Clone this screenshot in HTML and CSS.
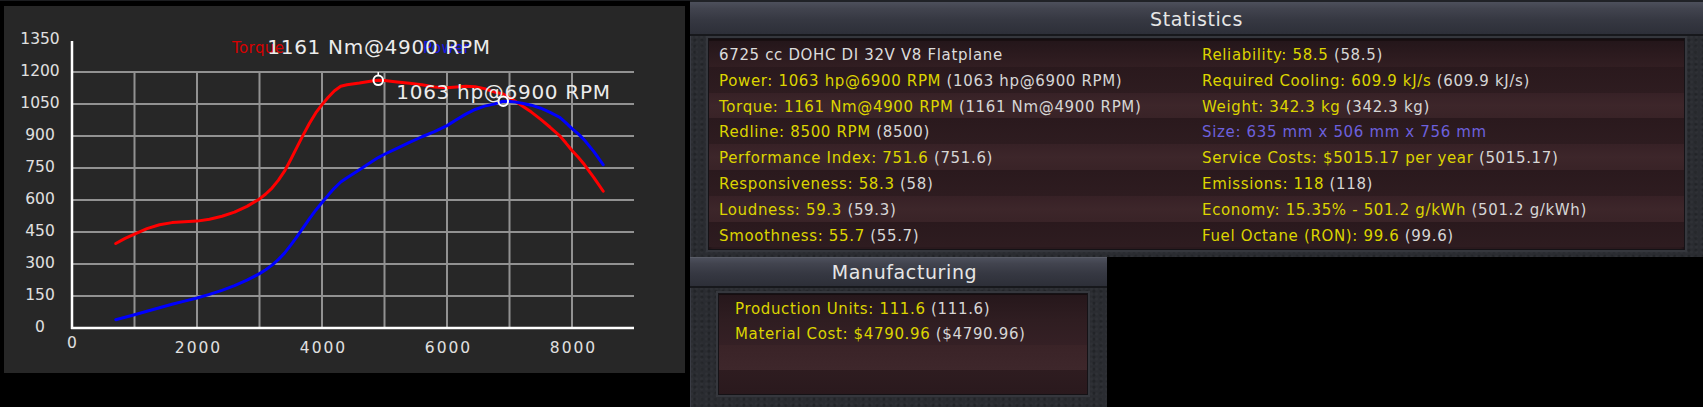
FILE: index.html
```html
<!DOCTYPE html>
<html lang="en">
<head>
<meta charset="utf-8">
<title>Engine Statistics</title>
<link rel="stylesheet" href="styles.css">
</head>
<body>
<div class="app">
  <div class="chart-col">
    <div class="chart-box">
      <svg class="chart" width="681" height="365" viewBox="4 5 681 365" xmlns="http://www.w3.org/2000/svg">
        <g class="grid">
          <line x1="72" y1="295" x2="634" y2="295"/>
          <line x1="72" y1="263" x2="634" y2="263"/>
          <line x1="72" y1="231" x2="634" y2="231"/>
          <line x1="72" y1="199" x2="634" y2="199"/>
          <line x1="72" y1="167" x2="634" y2="167"/>
          <line x1="72" y1="135" x2="634" y2="135"/>
          <line x1="72" y1="103" x2="634" y2="103"/>
          <line x1="72" y1="71" x2="634" y2="71"/>
          <line x1="134.5" y1="71" x2="134.5" y2="327"/>
          <line x1="197" y1="71" x2="197" y2="327"/>
          <line x1="259.5" y1="71" x2="259.5" y2="327"/>
          <line x1="322" y1="71" x2="322" y2="327"/>
          <line x1="384.5" y1="71" x2="384.5" y2="327"/>
          <line x1="447" y1="71" x2="447" y2="327"/>
          <line x1="509.5" y1="71" x2="509.5" y2="327"/>
          <line x1="572" y1="71" x2="572" y2="327"/>
        </g>
        <g class="axes">
          <line x1="72" y1="40" x2="72" y2="328"/>
          <line x1="71" y1="327" x2="634" y2="327"/>
        </g>
        <g class="ylabels">
          <text x="40" y="43">1350</text>
          <text x="40" y="75">1200</text>
          <text x="40" y="107">1050</text>
          <text x="40" y="139">900</text>
          <text x="40" y="171">750</text>
          <text x="40" y="203">600</text>
          <text x="40" y="235">450</text>
          <text x="40" y="267">300</text>
          <text x="40" y="299">150</text>
          <text x="40" y="331">0</text>
        </g>
        <g class="xlabels">
          <text x="73" y="347">0</text>
          <text x="198.5" y="352">2000</text>
          <text x="323.5" y="352">4000</text>
          <text x="448.5" y="352">6000</text>
          <text x="573.5" y="352">8000</text>
        </g>
        <text class="legend legend-torque" x="232" y="52">Torque</text>
        <text class="legend legend-power" x="423" y="52">Power</text>
        <g transform="translate(72 327) scale(0.0625 -0.2133333)">
          <polyline class="curve torque" vector-effect="non-scaling-stroke" points="700,396 850,420 1000,440 1200,466 1400,484 1600,494 1800,498 2000,501 2200,510 2400,524 2600,543 2800,570 3000,605 3100,628 3200,656 3300,692 3400,735 3500,790 3600,848 3700,905 3800,960 3900,1008 4000,1047 4100,1082 4200,1112 4300,1133 4400,1140 4600,1148 4800,1158 4900,1161 5000,1160 5200,1153 5400,1147 5600,1140 5800,1130 6000,1126 6150,1130 6300,1133 6450,1131 6600,1122 6750,1107 6900,1097 7000,1080 7100,1062 7200,1042 7350,1012 7500,978 7650,941 7800,902 7900,868 8000,832 8100,800 8200,765 8350,705 8500,641"/>
          <polyline class="curve power" vector-effect="non-scaling-stroke" points="700,38.9 850,50.1 1000,61.8 1200,78.5 1400,95.2 1600,111 1800,125.9 2000,140.7 2200,157.6 2400,176.6 2600,198.3 2800,224.1 3000,254.9 3100,273.4 3200,294.8 3300,320.7 3400,350.9 3500,388.3 3600,428.7 3700,470.2 3800,512.3 3900,552.1 4000,588.1 4100,623 4200,655.9 4300,684.2 4400,704.4 4600,741.6 4800,780.6 4900,798.9 5000,814.5 5200,842 5400,869.8 5600,896.5 5800,920.4 6000,948.7 6150,975.9 6300,1002.4 6450,1024.4 6600,1039.9 6750,1049.3 6900,1062.9 7000,1061.6 7100,1058.9 7200,1053.6 7350,1044.5 7500,1030.1 7650,1010.9 7800,988 7900,963 8000,934.7 8100,910 8200,880.9 8350,826.7 8500,765.1"/>
        </g>
        <line class="marker-tick" x1="378.25" y1="71" x2="378.25" y2="75"/>
        <circle class="marker" cx="378.25" cy="79.3" r="4.8"/>
        <circle class="marker" cx="503.25" cy="100.2" r="4.8"/>
        <text class="peak" x="379" y="53">1161 Nm@4900 RPM</text>
        <text class="peak" x="503.5" y="98">1063 hp@6900 RPM</text>
      </svg>
    </div>
  </div>

  <div class="right-col">
    <section class="panel stats">
      <header class="panel-head"><h2 class="panel-title">Statistics</h2></header>
      <div class="panel-body">
        <div class="stat-box">
          <div class="row"><span class="cell"><span class="plain">6725 cc DOHC DI 32V V8 Flatplane</span></span><span class="cell"><span class="lbl">Reliability: 58.5</span> <span class="val">(58.5)</span></span></div>
          <div class="row"><span class="cell"><span class="lbl">Power: 1063 hp@6900 RPM</span> <span class="val">(1063 hp@6900 RPM)</span></span><span class="cell"><span class="lbl">Required Cooling: 609.9 kJ/s</span> <span class="val">(609.9 kJ/s)</span></span></div>
          <div class="row"><span class="cell"><span class="lbl">Torque: 1161 Nm@4900 RPM</span> <span class="val">(1161 Nm@4900 RPM)</span></span><span class="cell"><span class="lbl">Weight: 342.3 kg</span> <span class="val">(342.3 kg)</span></span></div>
          <div class="row"><span class="cell"><span class="lbl">Redline: 8500 RPM</span> <span class="val">(8500)</span></span><span class="cell"><span class="size">Size: 635 mm x 506 mm x 756 mm</span></span></div>
          <div class="row"><span class="cell"><span class="lbl">Performance Index: 751.6</span> <span class="val">(751.6)</span></span><span class="cell"><span class="lbl">Service Costs: $5015.17 per year</span> <span class="val">(5015.17)</span></span></div>
          <div class="row"><span class="cell"><span class="lbl">Responsiveness: 58.3</span> <span class="val">(58)</span></span><span class="cell"><span class="lbl">Emissions: 118</span> <span class="val">(118)</span></span></div>
          <div class="row"><span class="cell"><span class="lbl">Loudness: 59.3</span> <span class="val">(59.3)</span></span><span class="cell"><span class="lbl">Economy: 15.35% - 501.2 g/kWh</span> <span class="val">(501.2 g/kWh)</span></span></div>
          <div class="row"><span class="cell"><span class="lbl">Smoothness: 55.7</span> <span class="val">(55.7)</span></span><span class="cell"><span class="lbl">Fuel Octane (RON): 99.6</span> <span class="val">(99.6)</span></span></div>
        </div>
      </div>
    </section>

    <div class="lower">
      <section class="panel manuf">
        <header class="panel-head manuf-head"><h2 class="panel-title">Manufacturing</h2></header>
        <div class="panel-body manuf-body">
          <div class="manuf-box">
            <div class="mrow m1"><span class="lbl">Production Units: 111.6</span> <span class="val">(111.6)</span></div>
            <div class="mrow m2"><span class="lbl">Material Cost: $4790.96</span> <span class="val">($4790.96)</span></div>
            <div class="mrow m3"></div>
            <div class="mrow m4"></div>
          </div>
        </div>
      </section>
      <div class="void"></div>
    </div>
  </div>
</div>
</body>
</html>
```

FILE: styles.css
```css
* { box-sizing: border-box; }

html, body {
  margin: 0;
  padding: 0;
  background: #000;
}

body {
  width: 1703px;
  height: 407px;
  overflow: hidden;
  font-family: "DejaVu Sans", Verdana, sans-serif;
}

.app {
  display: flex;
  height: 407px;
}

/* ---------- chart ---------- */
.chart-col {
  width: 690px;
  flex: 0 0 690px;
  padding: 5px 5px 0 4px;
  background: #000;
  border-top: 1px solid #1c1d20;
}

.chart-box {
  width: 681px;
  height: 367px;
  background: #272727;
}

.chart { display: block; }

.grid line {
  stroke: #929292;
  stroke-width: 2;
}

.axes line {
  stroke: #ffffff;
  stroke-width: 2.5;
}

.ylabels text,
.xlabels text {
  fill: #e0e0e0;
  font-family: "DejaVu Sans", Verdana, sans-serif;
  font-size: 15.5px;
  text-anchor: middle;
}

.xlabels text { letter-spacing: 2px; }

.legend {
  font-family: "DejaVu Sans", Verdana, sans-serif;
  font-size: 15px;
  letter-spacing: 0.4px;
}

.legend-torque { fill: #d80000; }
.legend-power { fill: #1616e6; }

.curve {
  fill: none;
  stroke-width: 3;
  stroke-linejoin: round;
  stroke-linecap: round;
}

.torque { stroke: #ff0000; }
.power { stroke: #0000ff; }

.marker {
  fill: none;
  stroke: #ffffff;
  stroke-width: 2;
}

.marker-tick {
  stroke: #ffffff;
  stroke-width: 1.5;
}

.peak {
  fill: #ececec;
  font-family: "DejaVu Sans", Verdana, sans-serif;
  font-size: 20px;
  letter-spacing: 0.7px;
  text-anchor: middle;
}

/* ---------- right column ---------- */
.right-col {
  flex: 1;
  display: flex;
  flex-direction: column;
}

.panel {
  background-color: #2a2c31;
  background-image:
    radial-gradient(circle at 30% 40%, rgba(255,255,255,0.025) 0 1px, transparent 2px),
    radial-gradient(circle at 70% 70%, rgba(0,0,0,0.18) 0 1px, transparent 2px);
  background-size: 5px 5px, 7px 6px;
  box-shadow: inset 1px 0 0 #3b3d45;
}

.panel-head {
  background: linear-gradient(to bottom, #4d505c 0%, #42444f 20%, #363842 55%, #2d2f38 100%);
  border-top: 2px solid #202227;
  border-bottom: 2px solid #17181c;
  text-align: center;
  color: #e6e6e6;
}

.panel-title {
  margin: 0;
  font-weight: normal;
  font-size: 19px;
  letter-spacing: 0.6px;
}

.stats {
  height: 257px;
  flex: 0 0 257px;
}

.stats .panel-head {
  height: 36px;
  padding-top: 2px;
  line-height: 30px;
}

.stats .panel-body {
  padding: 2px 18px 0 18px;
}

.stat-box {
  height: 212px;
  border: 1px solid #151216;
  padding-top: 2px;
  background: #2b1a1e;
  box-shadow: 0 0 0 2px #35373d, inset 0 3px 4px rgba(0,0,0,0.55);
  font-size: 15px;
  letter-spacing: 0.65px;
}

.row {
  display: flex;
  height: 25.8px;
  padding: 3px 0 0 10px;
  line-height: 22.8px;
  white-space: nowrap;
  background: linear-gradient(to bottom, #2a191d, #2e1c20);
}

.row:nth-child(odd) {
  background: linear-gradient(to bottom, #372126, #3d262a 50%, #392327);
}

.row:first-child {
  background: linear-gradient(to bottom, #24161a, #321e22);
}

.cell {
  flex: 0 0 483px;
}

.cell + .cell { flex: 1; }

.lbl { color: #dcd400; }
.val { color: #d6d6d6; }
.plain { color: #dcdcdc; }
.size { color: #6c60dc; }

/* ---------- manufacturing ---------- */
.lower {
  display: flex;
  height: 150px;
}

.manuf {
  width: 417px;
  flex: 0 0 417px;
}

.manuf-head {
  height: 31px;
  border-top: 1px solid #5a5d68;
  border-bottom: 2px solid #17181c;
  line-height: 28px;
  padding-left: 12px;
}

.manuf-body {
  padding: 5px 19px 0 28px;
}

.manuf-box {
  height: 102px;
  border: 1px solid #151216;
  padding-top: 1px;
  overflow: hidden;
  background: #2b1a1e;
  box-shadow: 0 0 0 2px #35373d, inset 0 3px 4px rgba(0,0,0,0.55);
  font-size: 15px;
  letter-spacing: 0.65px;
}

.mrow {
  height: 25px;
  padding: 3px 0 0 16px;
  line-height: 22px;
  white-space: nowrap;
}

.m1 { background: linear-gradient(to bottom, #26171b, #2f1d21); }
.m2 { background: linear-gradient(to bottom, #2f1d21, #352025); }
.m3 { background: linear-gradient(to bottom, #3a2327, #3e272b); }
.m4 { background: linear-gradient(to bottom, #2e1c20, #2a191d); }

.void {
  flex: 1;
  background: #000;
}
```
